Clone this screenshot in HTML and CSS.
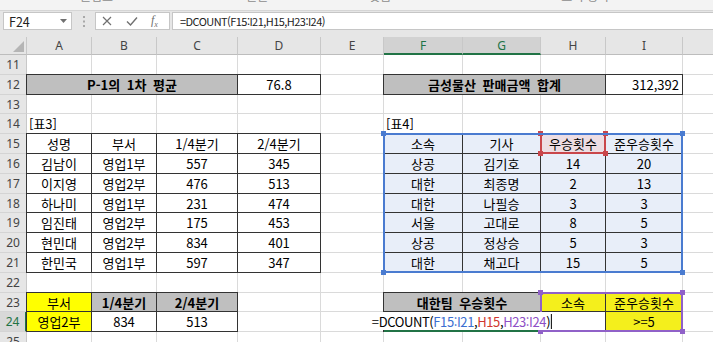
FILE: index.html
```html
<!DOCTYPE html>
<html lang="ko">
<head>
    <meta charset="UTF-8">
    <meta name="viewport" content="width=device-width, initial-scale=1.0">
    <title>DCOUNT 함수</title>
    <link rel="stylesheet" href="styles.css">
</head>
<body>
    <div class="ribbon">
        <span class="group-label clipboard">클립보드</span>
        <span class="group-label font">글꼴</span>
        <span class="group-label align">맞춤</span>
        <span class="group-label number">표시 형식</span>
    </div>

    <div class="formula-bar">
        <div class="name-box">
            <span>F24</span>
            <svg width="7" height="4" viewBox="0 0 7 4"><path d="M0 0h7L3.5 4z" fill="#707070"/></svg>
        </div>
        <div class="grip">
            <svg width="2" height="11" viewBox="0 0 2 11"><rect x="0" y="0" width="2" height="2" fill="#a8a8a8"/><rect x="0" y="4.5" width="2" height="2" fill="#a8a8a8"/><rect x="0" y="9" width="2" height="2" fill="#a8a8a8"/></svg>
        </div>
        <div class="fx-buttons">
            <svg class="cancel" width="10" height="10" viewBox="0 0 10 10"><path d="M1 1l8 8M9 1L1 9" stroke="#707070" stroke-width="1.2" fill="none"/></svg>
            <svg class="enter" width="12" height="10" viewBox="0 0 12 10"><path d="M1 5.5l3.5 3.5L11 1.5" stroke="#707070" stroke-width="1.4" fill="none"/></svg>
            <span class="fx"><i>f</i><sub>x</sub></span>
        </div>
        <div class="formula-input">=DCOUNT(F15:I21,H15,H23:I24)</div>
    </div>

    <div class="sheet">
        <!-- column headers -->
        <div class="corner"><svg width="11" height="11" viewBox="0 0 11 11"><path d="M11 0v11H0z" fill="#b5b5b5"/></svg></div>
        <div class="ch">A</div><div class="ch">B</div><div class="ch">C</div><div class="ch">D</div><div class="ch">E</div>
        <div class="ch on">F</div><div class="ch on">G</div><div class="ch">H</div><div class="ch">I</div><div class="ch">J</div>

        <!-- 11 -->
        <div class="rh">11</div>
        <div class="c"></div><div class="c"></div><div class="c"></div><div class="c"></div><div class="c"></div>
        <div class="c"></div><div class="c"></div><div class="c"></div><div class="c"></div><div class="c"></div>

        <!-- 12 -->
        <div class="rh">12</div>
        <div class="block avg">
            <div class="title wide">P-1의 1차 평균</div>
            <div>76.8</div>
        </div>
        <div class="c"></div>
        <div class="block total">
            <div class="title wide">금성물산 판매금액 합계</div>
            <div class="num">312,392</div>
        </div>
        <div class="c"></div>

        <!-- 13 -->
        <div class="rh">13</div>
        <div class="c"></div><div class="c"></div><div class="c"></div><div class="c"></div><div class="c"></div>
        <div class="c"></div><div class="c"></div><div class="c"></div><div class="c"></div><div class="c"></div>

        <!-- 14 -->
        <div class="rh">14</div>
        <div class="c label">[표3]</div><div class="c"></div><div class="c"></div><div class="c"></div><div class="c"></div>
        <div class="c label">[표4]</div><div class="c"></div><div class="c"></div><div class="c"></div><div class="c"></div>

        <!-- 15 - 21 -->
        <div class="rh">15</div>
        <div class="block t3">
            <div>성명</div><div>부서</div><div>1/4분기</div><div>2/4분기</div>
            <div>김남이</div><div>영업1부</div><div>557</div><div>345</div>
            <div>이지영</div><div>영업2부</div><div>476</div><div>513</div>
            <div>하나미</div><div>영업1부</div><div>231</div><div>474</div>
            <div>임진태</div><div>영업2부</div><div>175</div><div>453</div>
            <div>현민대</div><div>영업2부</div><div>834</div><div>401</div>
            <div>한민국</div><div>영업1부</div><div>597</div><div>347</div>
        </div>
        <div class="c"></div>
        <div class="block t4">
            <div>소속</div><div>기사</div>
            <div class="hot">우승횟수<span class="sel red"><i></i><i></i><i></i><i></i></span></div>
            <div>준우승횟수</div>
            <div>상공</div><div>김기호</div><div>14</div><div>20</div>
            <div>대한</div><div>최종명</div><div>2</div><div>13</div>
            <div>대한</div><div>나필승</div><div>3</div><div>3</div>
            <div>서울</div><div>고대로</div><div>8</div><div>5</div>
            <div>상공</div><div>정상승</div><div>5</div><div>3</div>
            <div>대한</div><div>채고다</div><div>15</div><div>5</div>
            <span class="sel blue"><i></i><i></i><i></i><i></i></span>
        </div>
        <div class="c"></div>
        <div class="rh">16</div><div class="c"></div><div class="c"></div>
        <div class="rh">17</div><div class="c"></div><div class="c"></div>
        <div class="rh">18</div><div class="c"></div><div class="c"></div>
        <div class="rh">19</div><div class="c"></div><div class="c"></div>
        <div class="rh">20</div><div class="c"></div><div class="c"></div>
        <div class="rh">21</div><div class="c"></div><div class="c"></div>

        <!-- 22 -->
        <div class="rh">22</div>
        <div class="c"></div><div class="c"></div><div class="c"></div><div class="c"></div><div class="c"></div>
        <div class="c"></div><div class="c"></div><div class="c"></div><div class="c"></div><div class="c"></div>

        <!-- 23 - 24 -->
        <div class="rh">23</div>
        <div class="block q1">
            <div class="yellow">부서</div><div class="title">1/4분기</div><div class="title">2/4분기</div>
            <div class="yellow">영업2부</div><div>834</div><div>513</div>
        </div>
        <div class="c"></div><div class="c"></div>
        <div class="block dsum">
            <div class="title pair">대한팀 우승횟수</div>
            <div class="active pair">
                <span class="editor">=DCOUNT(<span class="ref-f">F15:I21</span>,<span class="ref-h">H15</span>,<span class="ref-c">H23:I24</span>)<span class="cursor"></span></span>
            </div>
        </div>
        <div class="block crit">
            <div class="yellow soft">소속</div><div class="yellow soft">준우승횟수</div>
            <div></div><div class="yellow soft">&gt;=5</div>
            <span class="sel purple"><i></i><i></i><i></i><i></i></span>
        </div>
        <div class="c"></div>
        <div class="rh on">24</div><div class="c"></div><div class="c"></div><div class="c"></div>

        <!-- 25 -->
        <div class="rh">25</div>
        <div class="c"></div><div class="c"></div><div class="c"></div><div class="c"></div><div class="c"></div>
        <div class="c"></div><div class="c"></div><div class="c"></div><div class="c"></div><div class="c"></div>
    </div>
</body>
</html>
```

FILE: styles.css
```css
/* Basic page */
* {
    box-sizing: border-box;
}
body {
    margin: 0;
    width: 713px;
    height: 342px;
    overflow: hidden;
    background-color: #fff;
    color: #000;
    font-family: "Noto Sans CJK KR", "Noto Sans", sans-serif;
}

/* Ribbon remains at the top */
.ribbon {
    height: 11px;
    display: flex;
    overflow: hidden;
    background-color: #f3f3f3;
    border-bottom: 1px solid #d5d5d5;
    font-size: 12px;
    line-height: 14px;
    color: #8c8c8c;
}
.group-label { margin-top: -11px; white-space: nowrap; }
.group-label.clipboard { margin-left: 80px; }
.group-label.font { margin-left: 122px; }
.group-label.align { margin-left: 101px; }
.group-label.number { margin-left: 170px; }

/* Formula bar */
.formula-bar {
    height: 26px;
    display: flex;
    padding: 1px 0 7px 3px;
    background-color: #e6e6e6;
}
.name-box {
    width: 69px;
    display: flex;
    align-items: center;
    justify-content: space-between;
    padding: 0 4px 0 5px;
    background-color: #fff;
    border: 1px solid #c6c6c6;
    font-size: 12.5px;
    color: #222;
}
.grip {
    width: 23px;
    display: flex;
    align-items: center;
    justify-content: center;
}
.fx-buttons {
    width: 75px;
    display: flex;
    align-items: center;
    padding-left: 6px;
    background-color: #fff;
    border: 1px solid #c6c6c6;
}
.fx-buttons .enter { margin-left: 14px; }
.fx {
    margin-left: 13px;
    font-family: "Liberation Serif", serif;
    font-size: 12px;
    color: #707070;
}
.fx sub { font-size: 8px; font-style: italic; }
.formula-input {
    flex: 1;
    display: flex;
    align-items: center;
    margin-left: 2px;
    padding-left: 7px;
    background-color: #fff;
    border: 1px solid #c6c6c6;
    border-right: none;
    font-size: 11px;
    letter-spacing: -0.55px;
    color: #222;
}

/* Sheet grid */
.sheet {
    display: grid;
    grid-template-columns: 27px 65px 65px 81px 83px 63px 79px 78px 65px 77px 77px;
    grid-template-rows: 18px 20px 20px 19px 20px 20px 20px 20px 19px 20px 20px 20px 20px 19px 20px 20px;
    font-size: 13px;
}
.corner, .ch, .rh {
    display: flex;
    align-items: center;
    justify-content: center;
    background-color: #e6e6e6;
    border-right: 1px solid #c8c8c8;
    border-bottom: 1px solid #c8c8c8;
    font-family: "Noto Sans", sans-serif;
    font-size: 12px;
    color: #444;
}
.corner {
    align-items: flex-end;
    justify-content: flex-end;
    padding: 0 2px 2px 0;
    border-bottom-color: #bdbdbd;
}
.ch { border-bottom-color: #bdbdbd; }
.ch.on {
    background-color: #d2d2d2;
    color: #217346;
    border-bottom: 2px solid #217346;
}
.rh { border-bottom-color: #d4d4d4; }
.rh.on {
    background-color: #d8d8d8;
    color: #217346;
    border-right: 2px solid #217346;
}
.c {
    border-right: 1px solid #dadada;
    border-bottom: 1px solid #dadada;
}
.label {
    display: flex;
    align-items: center;
    padding-left: 2px;
    white-space: nowrap;
}

/* Bordered ranges */
.block {
    position: relative;
    display: grid;
    grid-template-columns: subgrid;
    grid-template-rows: subgrid;
    margin: -1px 0 0 -1px;
    border-top: 1px solid #333;
    border-left: 1px solid #333;
}
.block > div {
    display: flex;
    align-items: center;
    justify-content: center;
    white-space: nowrap;
    border-right: 1px solid #333;
    border-bottom: 1px solid #333;
}
.block > .num { justify-content: flex-end; padding-right: 3px; }
.avg { grid-area: 3 / 2 / 4 / 6; }
.total { grid-area: 3 / 7 / 4 / 11; }
.t3 { grid-area: 6 / 2 / 13 / 6; }
.t4 { grid-area: 6 / 7 / 13 / 11; background-color: #e8eef9; }
.q1 { grid-area: 14 / 2 / 16 / 5; }
.dsum { grid-area: 14 / 7 / 16 / 9; }
.crit { grid-area: 14 / 9 / 16 / 11; }
.wide { grid-column: span 3; }
.pair { grid-column: span 2; }
.title {
    background-color: #bfbfbf;
    font-weight: 700;
    word-spacing: 3px;
}
.yellow { background-color: #ffff00; }
.yellow.soft { background-color: #f4ef1c; }
.hot {
    position: relative;
    background-color: #eddde3;
}

/* Reference highlights while editing the formula */
.sel {
    position: absolute;
    top: -1px;
    left: -1px;
    right: 0;
    bottom: 0;
    z-index: 1;
    border: 2px solid currentColor;
    pointer-events: none;
}
.hot .sel { right: -1px; bottom: -1px; }
.sel i {
    position: absolute;
    width: 5px;
    height: 5px;
    background-color: currentColor;
}
.sel i:nth-child(1) { top: -4px; left: -4px; }
.sel i:nth-child(2) { top: -4px; right: -4px; }
.sel i:nth-child(3) { bottom: -4px; left: -4px; }
.sel i:nth-child(4) { bottom: -4px; right: -4px; }
.sel.blue { color: #4a7bd0; }
.sel.red { color: #c9464b; }
.sel.purple { color: #9061c8; }

/* Active cell in edit mode */
.block > .active {
    position: relative;
    border-bottom: 2px solid #217346;
}
.editor {
    position: absolute;
    top: 0;
    bottom: 0;
    left: 50%;
    transform: translateX(-50%);
    z-index: 2;
    display: flex;
    align-items: center;
    padding: 0 1px;
    background-color: #fff;
    letter-spacing: -0.4px;
    white-space: nowrap;
}
.cursor {
    width: 1px;
    height: 15px;
    margin-left: 1px;
    background-color: #000;
}
.ref-f { color: #3c6fd1; }
.ref-h { color: #d1362f; }
.ref-c { color: #8e4fc6; }
```
